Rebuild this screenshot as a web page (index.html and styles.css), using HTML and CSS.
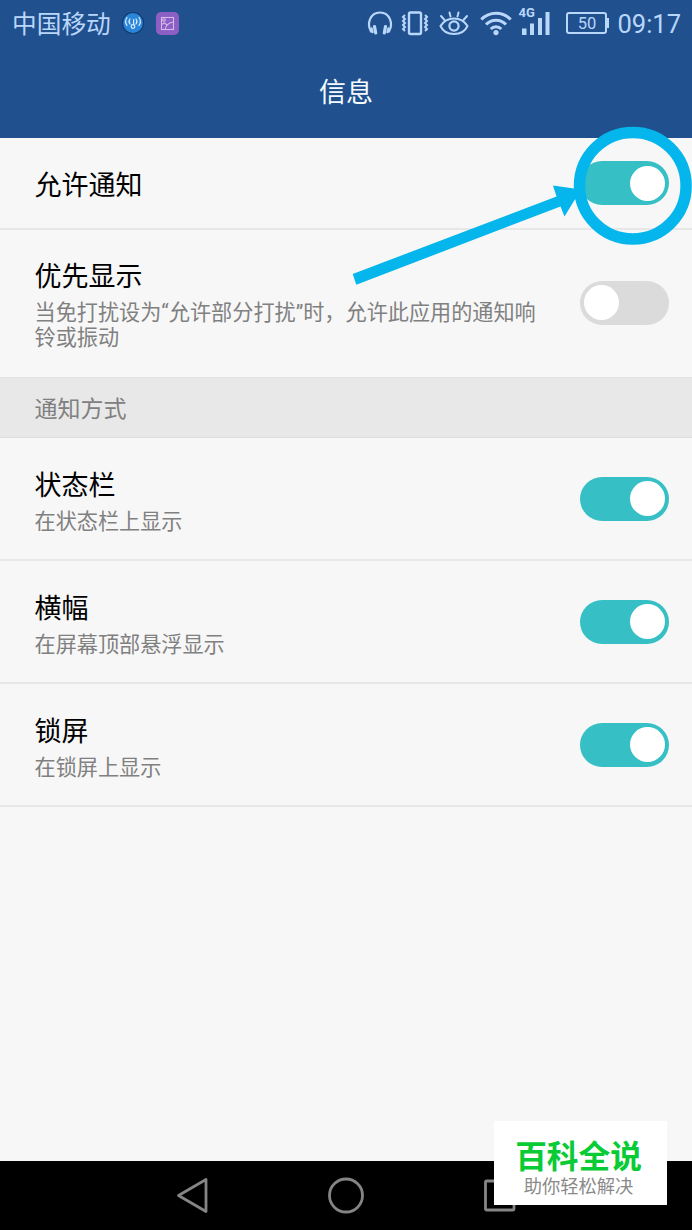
FILE: index.html
```
<!DOCTYPE html>
<html lang="zh-CN">
<head>
  <meta charset="utf-8">
  <title>信息</title>
  <link rel="stylesheet" href="styles.css">
</head>
<body>
  <div class="phone">
    <div class="status">
      <span class="carrier">中国移动</span>
      <svg class="icon-hotspot" width="24" height="24" viewBox="0 0 24 24" fill="none" stroke="#d9ecff" stroke-width="1.2" stroke-linecap="round">
        <circle cx="12" cy="12" r="10.5" fill="#2b86d9" stroke="#123b70"/>
        <circle cx="12" cy="15.5" r="1.8"/>
        <path d="M12.6 13.5V8.5M9 8c-1.2 1.5-1.2 3.5 0 5M15 8c1.2 1.5 1.2 3.5 0 5M6 6.5c-1.7 2.4-1.7 5.6 0 8M18 6.500c1.700 2.400 1.700 5.600 0 8"/>
      </svg>
      <svg class="icon-photo" width="23" height="23" viewBox="0 0 23 23" fill="none" stroke="#d9b8ee" stroke-width="1.1">
        <rect width="23" height="23" rx="5" fill="#8b5fc4" stroke="none"/>
        <rect x="5.500" y="5.500" width="12" height="12"/>
        <path d="M5.500 12.500l3-1.500 2.500 2M9 17.500c1-4.500 4-7 8.500-7.500"/>
        <circle cx="8" cy="8" r="1.300"/>
      </svg>
      <div class="status-right">
        <svg class="icon-headset" width="26" height="26" viewBox="0 0 26 26" fill="none" stroke="#b9d7fb" stroke-width="2.2" stroke-linecap="round">
          <path d="M4 21.500C-.5 14 3 2.500 13 2.500S26.500 14 22 21.500"/>
          <path d="M7.500 16.500l1.200 6.500M18.500 16.500l-1.200 6.500" stroke-width="3.200"/>
          <path d="M4.500 18.500l1 3.500M21.500 18.500l-1 3.500" stroke-width="2.400"/>
        </svg>
        <svg class="icon-vibrate" width="28" height="26" viewBox="0 0 28 26" fill="none" stroke="#b9d7fb">
          <rect x="8" y="2.500" width="12" height="21.500" rx="1.500" stroke-width="2.400"/>
          <path d="M4 5l-2 2 2 2-2 2 2 2-2 2 2 2-2 2 2 2M24 5l2 2-2 2 2 2-2 2 2 2-2 2 2 2-2 2" stroke-width="2"/>
        </svg>
        <svg class="icon-eye" width="30" height="26" viewBox="0 0 30 26" fill="none" stroke="#b9d7fb" stroke-width="2" stroke-linecap="round">
          <path d="M1.500 16C5 10.500 9.500 8.500 15 8.500S25 10.500 28.500 16C26 21.500 21 24 15 24S4 21.500 1.500 16z"/>
          <circle cx="15" cy="16" r="4.600" stroke-width="2.200"/>
          <path d="M2 6l3.500 4M10.500 2.500l1 4M19.500 2.500l-1 4M28 6l-3.500 4"/>
        </svg>
        <svg class="icon-wifi" width="32" height="26" viewBox="0 0 32 26" fill="none" stroke="#b9d7fb" stroke-width="3">
          <path d="M1.300 9.500C9.500 1.200 22.500 1.200 30.700 9.500M6 14.500c5.500-5.700 14.500-5.700 20 0M10.700 19c3-3.100 7.600-3.100 10.600 0"/>
          <circle cx="16" cy="22.600" r="2.600" fill="#b9d7fb" stroke="none"/>
        </svg>
        <div class="signal">
          <span class="signal-type">4G</span>
          <svg width="28" height="26" viewBox="0 0 28 26" fill="#b9d7fb">
            <path d="M0 18.500h4.500V25H0zM8 13.500h4V25H8zM16 8h4v17h-4zM23.500 2h4v23h-4z"/>
          </svg>
        </div>
        <div class="battery">50</div>
        <span class="clock">09:17</span>
      </div>
    </div>

    <div class="header">信息</div>

    <div class="list">
      <div class="row row-single">
        <div class="text">
          <div class="title">允许通知</div>
        </div>
        <div class="switch on"></div>
      </div>
      <div class="row row-tall">
        <div class="text">
          <div class="title">优先显示</div>
          <div class="desc">当免打扰设为“允许部分打扰”时，允许此应用的通知响铃或振动</div>
        </div>
        <div class="switch"></div>
      </div>
      <div class="section">通知方式</div>
      <div class="row">
        <div class="text">
          <div class="title">状态栏</div>
          <div class="desc">在状态栏上显示</div>
        </div>
        <div class="switch on"></div>
      </div>
      <div class="row">
        <div class="text">
          <div class="title">横幅</div>
          <div class="desc">在屏幕顶部悬浮显示</div>
        </div>
        <div class="switch on"></div>
      </div>
      <div class="row">
        <div class="text">
          <div class="title">锁屏</div>
          <div class="desc">在锁屏上显示</div>
        </div>
        <div class="switch on"></div>
      </div>
    </div>

    <div class="nav">
      <svg width="34" height="38" viewBox="0 0 34 38" fill="none" stroke="#858585" stroke-width="2.800" stroke-linejoin="round">
        <path d="M3.500 18.500L31 2.500v32z"/>
      </svg>
      <svg width="38" height="38" viewBox="0 0 38 38" fill="none" stroke="#858585" stroke-width="2.800">
        <circle cx="19" cy="18.500" r="16.500"/>
      </svg>
      <svg width="34" height="38" viewBox="0 0 34 38" fill="none" stroke="#858585" stroke-width="2.800">
        <rect x="2.500" y="4" width="28.500" height="29" rx="1"/>
      </svg>
    </div>

    <!-- arrow and ring around the first switch -->
    <svg class="mark" width="352" height="180" viewBox="340 110 352 180">
      <circle cx="632.800" cy="185.700" r="53.300" fill="none" stroke="#04b6ec" stroke-width="11.500"/>
      <path d="M352.700 274L556.500 196.500 553 185.500 581 189.500 564.500 216.500 560.500 206.500 356.300 284.700z" fill="#04b6ec"/>
    </svg>

    <div class="watermark">
      <div class="brand">百科全说</div>
      <div class="slogan">助你轻松解决</div>
    </div>
  </div>
</body>
</html>
```

FILE: styles.css
```
body {
  margin: 0;
  font-family: Roboto, "Noto Sans CJK SC", sans-serif;
}

.phone {
  position: relative;
  display: flex;
  flex-direction: column;
  width: 692px;
  height: 1230px;
  overflow: hidden;
  background: #F7F7F7;
}

.status {
  display: flex;
  align-items: center;
  box-sizing: border-box;
  height: 46px;
  padding: 0 11px 0 12px;
  background: #20508E;
  color: #B9D7FB;
}

.carrier {
  padding-top: 3px;
  font-size: 24.7px;
  line-height: 43px;
}

.icon-hotspot {
  margin-left: 10px;
}

.icon-photo {
  margin-left: 11px;
}

.status-right {
  display: flex;
  align-items: center;
  margin-left: auto;
}

.status-right svg {
  display: block;
}

.icon-headset {
  margin-right: 8px;
}

.icon-vibrate {
  margin-right: 10px;
}

.icon-eye {
  margin-right: 11px;
}

.icon-wifi {
  margin-right: 10px;
}

.signal {
  position: relative;
  margin-right: 16px;
}

.signal-type {
  position: absolute;
  left: -4px;
  top: -3px;
  font-size: 13px;
  line-height: 12px;
  font-weight: bold;
}

.battery {
  position: relative;
  box-sizing: border-box;
  width: 41px;
  height: 22px;
  margin-right: 10px;
  border: 2px solid #B9D7FB;
  border-radius: 3px;
  font-size: 16.5px;
  line-height: 20px;
  text-align: center;
}

.battery::after {
  content: "";
  position: absolute;
  right: -4px;
  top: 4px;
  width: 2px;
  height: 10px;
  background: #B9D7FB;
}

.clock {
  padding-top: 2px;
  font-size: 25.5px;
}

.header {
  height: 92px;
  background: #20508E;
  color: #F4FBFF;
  font-size: 27px;
  line-height: 94px;
  text-align: center;
}

.list {
  flex: 1;
}

.row {
  display: flex;
  align-items: center;
  justify-content: space-between;
  box-sizing: border-box;
  height: 123px;
  padding: 0 23px 0 34.5px;
  border-bottom: 2px solid #E7E7E7;
}

.row-single {
  height: 92px;
}

.row-tall {
  height: 147px;
  border-bottom-color: #F7F7F7;
}

.text {
  align-self: flex-start;
  width: 510px;
  padding-top: 32px;
}

.row-tall .text {
  padding-top: 31px;
}

.title {
  color: #000000;
  font-size: 27px;
  line-height: 32px;
}

.desc {
  margin-top: 7px;
  color: #808080;
  font-size: 21.15px;
  line-height: 25px;
}

.section {
  box-sizing: border-box;
  height: 61px;
  padding-left: 34.5px;
  border-top: 1px solid #E2E2E2;
  border-bottom: 1px solid #DEDEDE;
  background: #E8E8E8;
  color: #808080;
  font-size: 23px;
  line-height: 63px;
}

.switch {
  display: flex;
  align-items: center;
  box-sizing: border-box;
  width: 89px;
  height: 44px;
  padding: 0 4px;
  border-radius: 22px;
  background: #DBDBDB;
}

.switch::before {
  content: "";
  width: 35px;
  height: 35px;
  border-radius: 50%;
  background: #FFFFFF;
}

.switch.on {
  justify-content: flex-end;
  background: #36C0C5;
}

.nav {
  display: flex;
  align-items: center;
  justify-content: center;
  gap: 118px;
  height: 69px;
  background: #000000;
}

.mark {
  position: absolute;
  left: 340px;
  top: 110px;
}

.watermark {
  position: absolute;
  left: 494px;
  top: 1121px;
  box-sizing: border-box;
  width: 173px;
  height: 84px;
  padding-top: 18px;
  background: #FFFFFF;
  text-align: center;
  white-space: nowrap;
}

.brand {
  padding-right: 4px;
  color: #08CB35;
  font-size: 31.7px;
  font-weight: bold;
  line-height: 38px;
}

.slogan {
  margin-top: -1px;
  padding-right: 4px;
  color: #8A8A8A;
  font-size: 18.3px;
  line-height: 22px;
}
```
